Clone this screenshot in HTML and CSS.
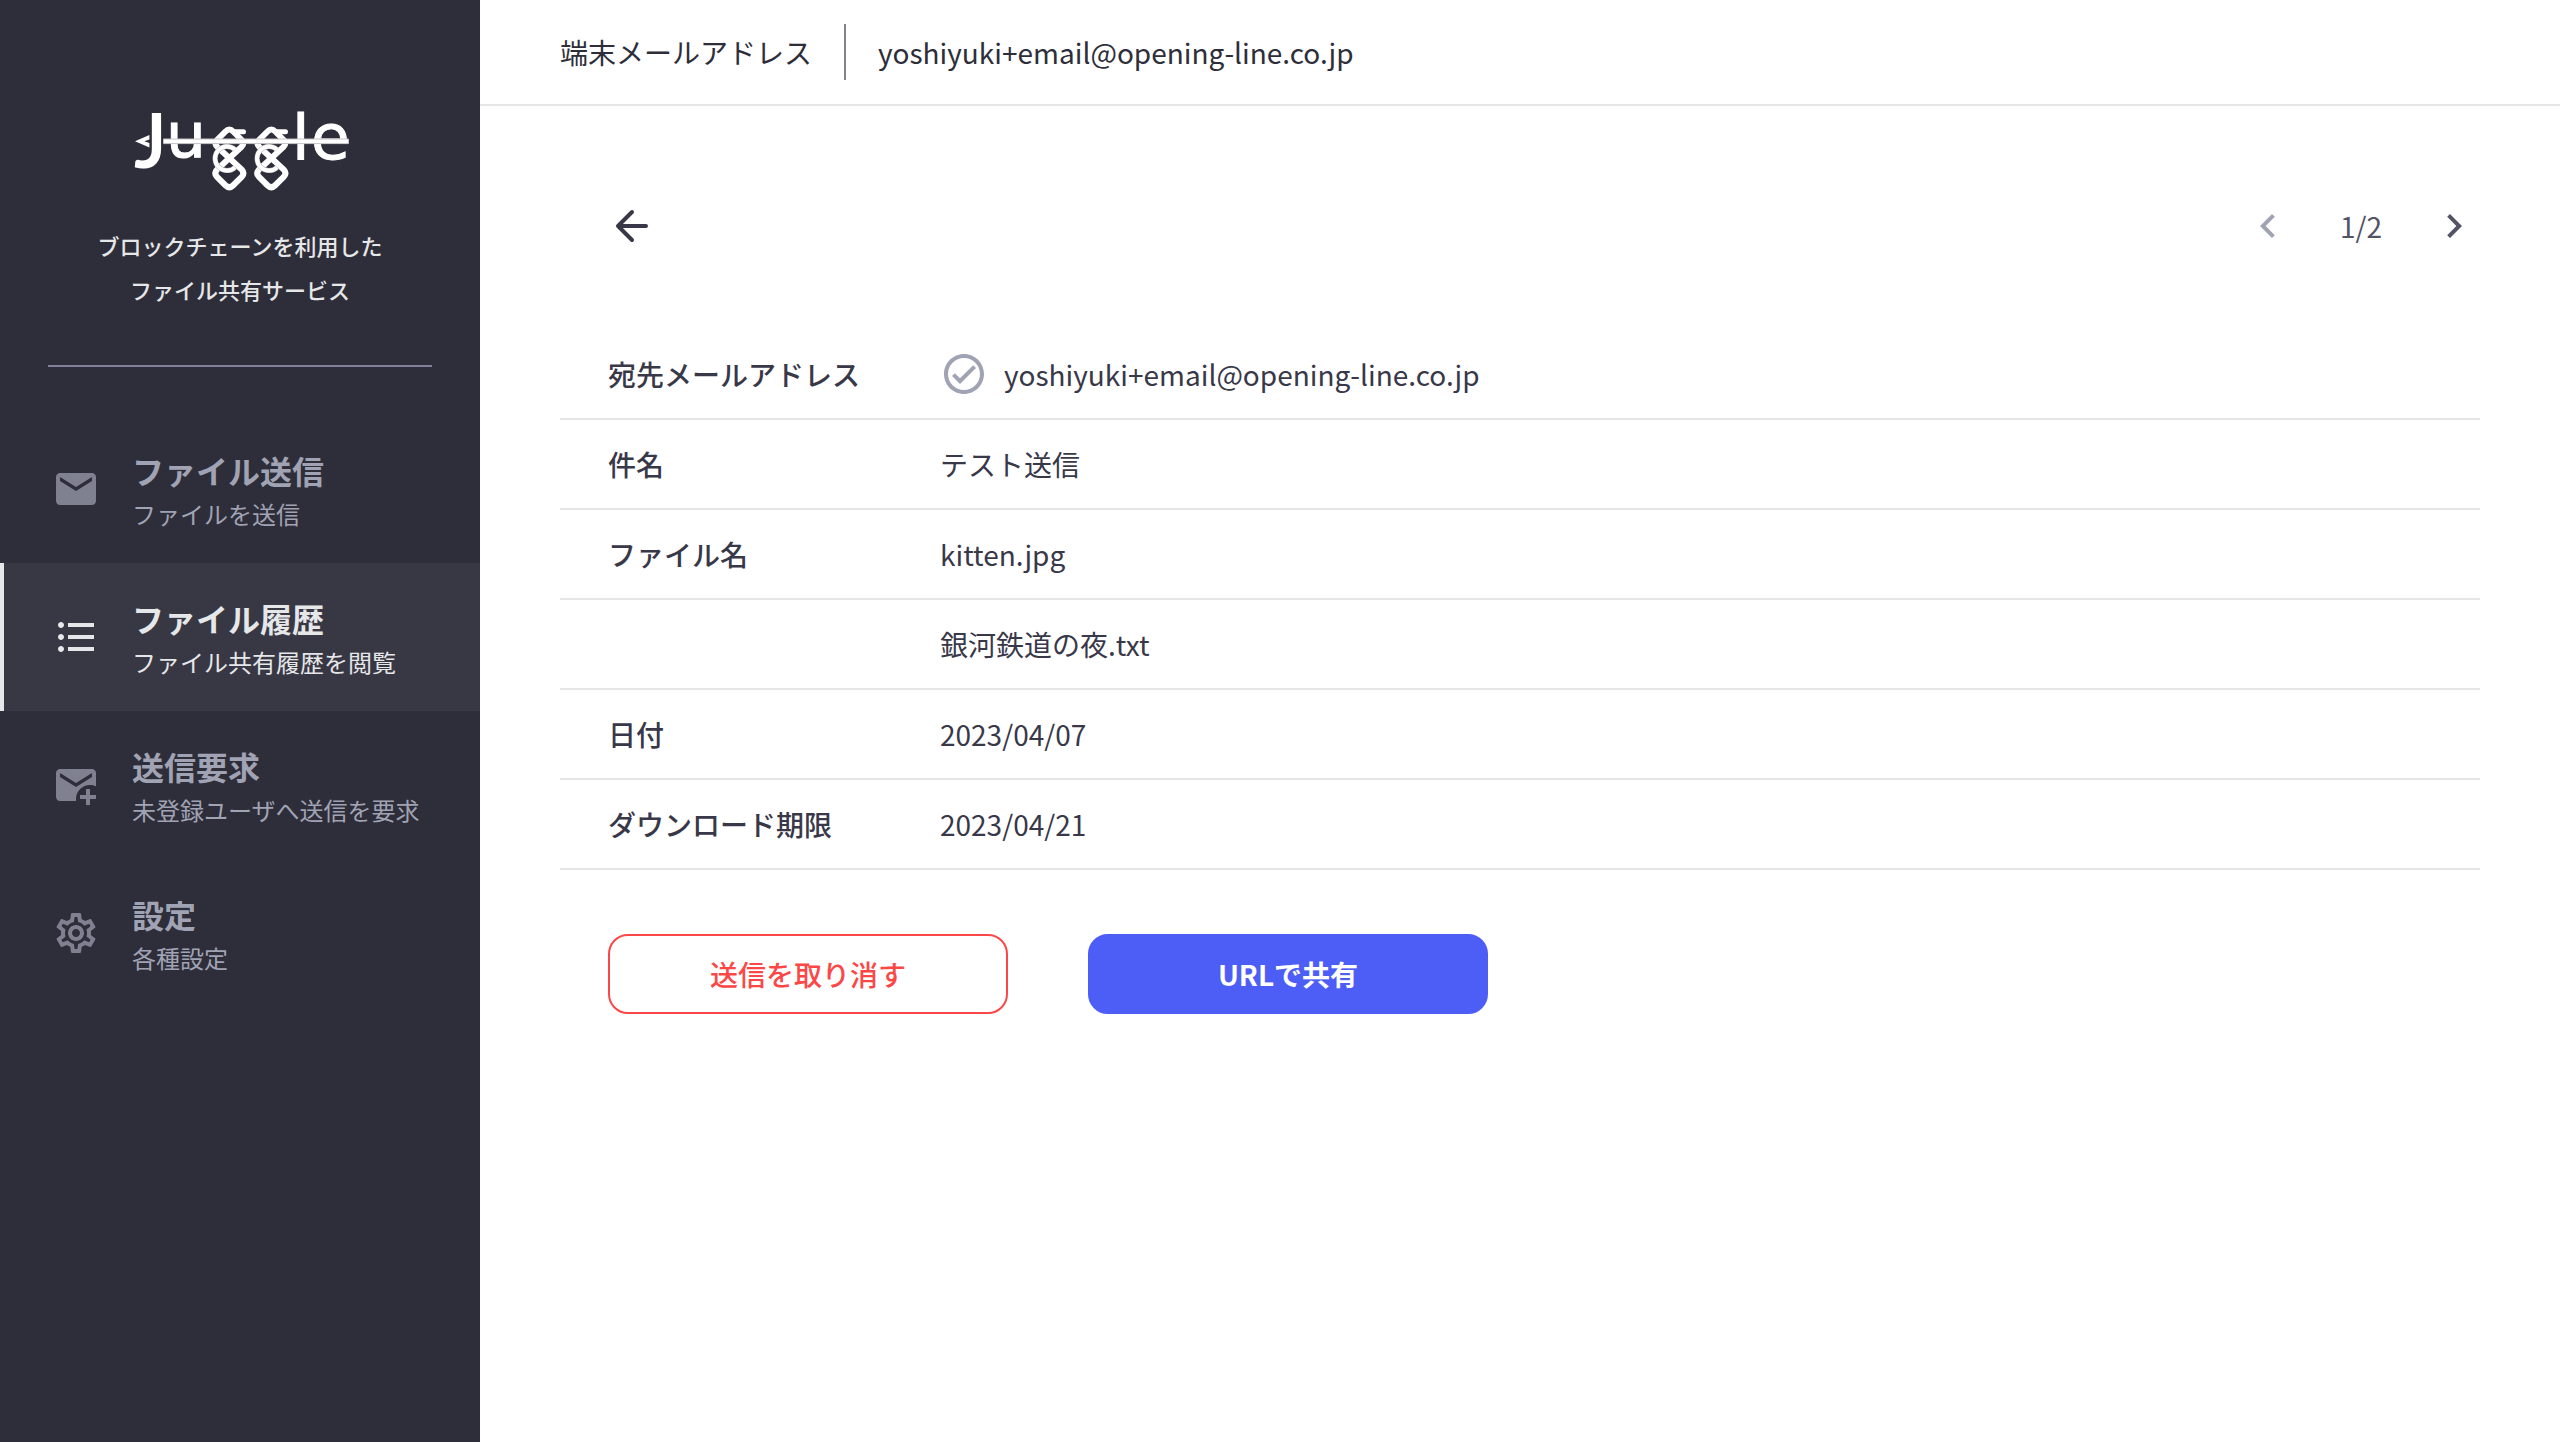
FILE: index.html
```html
<!DOCTYPE html>
<html lang="ja">

<head>
  <meta charset="UTF-8">
  <meta name="viewport" content="width=device-width, initial-scale=1.0">
  <title>Juggle - ファイル履歴</title>
  <link rel="stylesheet" href="styles.css">
</head>

<body>
  <aside class="sidebar">
    <div class="brand">
      <svg class="logo" viewBox="0 0 220 84" role="img" aria-label="Juggle">
        <path d="M5 33.3 19.400 27v4.600l-5 1.700 5 1.800v4.400z" fill="#fff"/>
        <text class="logo-j" x="5" y="59">J</text>
        <text class="logo-text" y="49 51 51" x="36 162 181">ule</text>
        <g id="loop">
          <path d="M104 23.800h9.500" class="ear"/>
          <path d="M95.500 23.500 87 32q-3 3.300 0 6.600L111.700 61.500q3.500 3.800 0 7.500L103 77.500q-3.700 3.500-7.400 0L87 69q-3.500-3.700 0-7.500L111.700 38.600q3-3.300 0-6.600L103.200 23.500q-3.850-4-7.700 0z" class="loop-line"/>
          <path d="M105 41.500a12 12 0 1 0 0 18" class="ring-edge"/>
          <path d="M105 41.500a12 12 0 1 0 0 18" class="ring"/>
        </g>
        <use href="#loop" x="42"/>
        <path d="M33.500 31h185v4.600h-185z" class="logo-bar"/>
      </svg>
      <p class="tagline">ブロックチェーンを利用した<br>ファイル共有サービス</p>
    </div>

    <nav class="menu" aria-label="メインメニュー">
      <a class="menu-item" href="#send">
        <svg class="icon" viewBox="0 0 24 24"><path d="M20 4H4c-1.100 0-1.990.9-1.990 2L2 18c0 1.100.9 2 2 2h16c1.100 0 2-.9 2-2V6c0-1.100-.9-2-2-2zm0 4l-8 5-8-5V6l8 5 8-5v2z"/></svg>
        <span class="menu-text">
          <span class="menu-title">ファイル送信</span>
          <span class="menu-desc">ファイルを送信</span>
        </span>
      </a>
      <a class="menu-item active" href="#history" aria-current="page">
        <svg class="icon" viewBox="0 0 24 24"><path d="M4.500 10.500c-.83 0-1.500.67-1.500 1.500s.67 1.500 1.500 1.500S6 12.830 6 12s-.67-1.500-1.500-1.500zm0-6C3.670 4.500 3 5.170 3 6s.67 1.500 1.500 1.500S6 6.830 6 6s-.67-1.500-1.500-1.500zm0 12c-.83 0-1.500.68-1.500 1.500s.68 1.500 1.500 1.500S6 18.820 6 18s-.67-1.500-1.500-1.500zM8 19h13v-2H8v2zm0-6h13v-2H8v2zm0-8v2h13V5H8z"/></svg>
        <span class="menu-text">
          <span class="menu-title">ファイル履歴</span>
          <span class="menu-desc">ファイル共有履歴を閲覧</span>
        </span>
      </a>
      <a class="menu-item" href="#request">
        <svg class="icon" viewBox="0 0 24 24"><path d="M12 19c0-3.870 3.130-7 7-7 1.080 0 2.090.25 3 .68V6c0-1.100-.9-2-2-2H4c-1.100 0-2 .9-2 2v12c0 1.100.9 2 2 2h8.080c-.05-.33-.08-.66-.08-1zM4 6l8 5 8-5v2l-8 5-8-5V6zM19 14v3h3v2h-3v3h-2v-3h-3v-2h3v-3z"/></svg>
        <span class="menu-text">
          <span class="menu-title">送信要求</span>
          <span class="menu-desc">未登録ユーザへ送信を要求</span>
        </span>
      </a>
      <a class="menu-item" href="#settings">
        <svg class="icon" viewBox="0 0 24 24"><path d="M19.430 12.980c.04-.32.07-.64.07-.98 0-.34-.03-.66-.07-.98l2.110-1.650c.19-.15.24-.42.12-.64l-2-3.460c-.09-.16-.26-.25-.44-.25-.06 0-.12.01-.17.03l-2.490 1c-.52-.4-1.080-.73-1.690-.98l-.38-2.650C14.460 2.180 14.250 2 14 2h-4c-.25 0-.46.18-.49.42l-.38 2.650c-.61.25-1.170.59-1.690.98l-2.490-1c-.06-.02-.12-.03-.18-.03-.17 0-.34.09-.43.25l-2 3.460c-.13.22-.07.49.12.64l2.110 1.650c-.04.32-.07.65-.07.98 0 .33.03.66.07.98l-2.110 1.650c-.19.15-.24.42-.12.64l2 3.460c.09.16.26.25.44.25.06 0 .12-.01.17-.03l2.490-1c.52.4 1.080.73 1.690.98l.38 2.650c.03.24.24.42.49.42h4c.25 0 .46-.18.49-.42l.38-2.650c.61-.25 1.170-.59 1.690-.98l2.490 1c.06.02.12.03.18.03.17 0 .34-.09.43-.25l2-3.460c.12-.22.07-.49-.12-.64l-2.110-1.650zm-1.980-1.710c.04.31.05.52.05.73 0 .21-.02.43-.05.73l-.14 1.130.89.7 1.080.84-.7 1.210-1.270-.51-1.040-.42-.9.68c-.43.32-.84.56-1.250.73l-1.060.43-.16 1.130-.2 1.350h-1.400l-.19-1.350-.16-1.130-1.060-.43c-.43-.18-.83-.41-1.230-.71l-.91-.7-1.060.43-1.270.51-.7-1.210 1.080-.84.89-.7-.14-1.130c-.03-.31-.05-.54-.05-.74s.02-.43.05-.73l.14-1.130-.89-.7-1.080-.84.7-1.210 1.270.51 1.040.42.9-.68c.43-.32.84-.56 1.250-.73l1.060-.43.16-1.130.2-1.350h1.390l.19 1.350.16 1.130 1.060.43c.43.18.83.41 1.230.71l.91.7 1.060-.43 1.270-.51.7 1.210-1.070.85-.89.7.14 1.130zM12 8c-2.210 0-4 1.790-4 4s1.790 4 4 4 4-1.790 4-4-1.790-4-4-4zm0 6c-1.100 0-2-.9-2-2s.9-2 2-2 2 .9 2 2-.9 2-2 2z"/></svg>
        <span class="menu-text">
          <span class="menu-title">設定</span>
          <span class="menu-desc">各種設定</span>
        </span>
      </a>
    </nav>
  </aside>

  <div class="content">
    <header class="topbar">
      <span class="topbar-label">端末メールアドレス</span>
      <span class="topbar-value">yoshiyuki+email@opening-line.co.jp</span>
    </header>

    <main class="detail">
      <div class="toolbar">
        <button class="icon-btn" type="button" aria-label="戻る">
          <svg class="icon" viewBox="0 0 24 24"><path d="M19 12H5M12 5l-7 7 7 7" class="arrow"/></svg>
        </button>
        <div class="pager">
          <button class="icon-btn" type="button" aria-label="前へ" disabled>
            <svg class="icon" viewBox="0 0 24 24"><path d="M15.410 7.410L14 6l-6 6 6 6 1.410-1.410L10.830 12z"/></svg>
          </button>
          <span>1/2</span>
          <button class="icon-btn" type="button" aria-label="次へ">
            <svg class="icon" viewBox="0 0 24 24"><path d="M10 6L8.590 7.410 13.170 12l-4.580 4.590L10 18l6-6z"/></svg>
          </button>
        </div>
      </div>

      <table class="info">
        <tbody>
          <tr>
            <th scope="row">宛先メールアドレス</th>
            <td>
              <div class="recipient">
                <svg class="icon" viewBox="0 0 24 24"><path d="M12 2C6.480 2 2 6.480 2 12s4.480 10 10 10 10-4.480 10-10S17.520 2 12 2zm0 18c-4.410 0-8-3.590-8-8s3.590-8 8-8 8 3.590 8 8-3.590 8-8 8zm4.590-12.420L10 14.170l-2.590-2.580L6 13l4 4 8-8z"/></svg>
                <span>yoshiyuki+email@opening-line.co.jp</span>
              </div>
            </td>
          </tr>
          <tr>
            <th scope="row">件名</th>
            <td>テスト送信</td>
          </tr>
          <tr>
            <th scope="row">ファイル名</th>
            <td>kitten.jpg</td>
          </tr>
          <tr>
            <th></th>
            <td>銀河鉄道の夜.txt</td>
          </tr>
          <tr>
            <th scope="row">日付</th>
            <td>2023/04/07</td>
          </tr>
          <tr>
            <th scope="row">ダウンロード期限</th>
            <td>2023/04/21</td>
          </tr>
        </tbody>
      </table>

      <div class="actions">
        <button class="btn btn-cancel" type="button">送信を取り消す</button>
        <button class="btn btn-share" type="button">URLで共有</button>
      </div>
    </main>
  </div>
</body>

</html>
```
FILE: styles.css
```css
:root {
  --dark: #2e2e3a;
  --dark-active: #383845;
  --text: #383849;
  --muted: #a0a3b4;
  --muted-icon: #7f8090;
  --line: #e6e6e6;
  --light: #e6e7e8;
  --red: #fc4747;
  --blue: #4d5ef7;
}

* {
  box-sizing: border-box;
}

body {
  display: flex;
  min-height: 100vh;
  margin: 0;
  font-family: "Noto Sans CJK JP", sans-serif;
  font-size: 28px;
  line-height: 40px;
  color: var(--text);
  background: #fff;
}

.icon {
  flex: none;
  display: block;
  width: 48px;
  height: 48px;
  fill: currentColor;
}

/* sidebar */
.sidebar {
  flex: none;
  width: 480px;
  background: var(--dark);
  color: var(--light);
}

.brand {
  display: flex;
  flex-direction: column;
  align-items: center;
  margin: 0 48px;
  padding: 108px 0 54px;
  border-bottom: 2px solid #7f7f96;
}

.logo {
  width: 220px;
  height: 84px;
  overflow: visible;
}

.logo-j,
.logo-text {
  fill: #fff;
  stroke: #fff;
}

.logo-j {
  font: 74px Lato, sans-serif;
  stroke-width: 2px;
}

.logo-text {
  font: 63px "DejaVu Sans", sans-serif;
  stroke-width: 1px;
}

.loop-line {
  fill: none;
  stroke: #fff;
  stroke-width: 6;
}

.ear {
  fill: none;
  stroke: #fff;
  stroke-width: 5;
  stroke-linecap: round;
}

.ring-edge {
  fill: none;
  stroke: #b9b9be;
  stroke-width: 5;
}

.ring {
  fill: none;
  stroke: #fff;
  stroke-width: 4;
}

.logo-bar {
  fill: #fff;
  stroke: #c4c4c8;
  stroke-width: 1;
}

.tagline {
  margin: 31px 0 0;
  font-size: 22px;
  line-height: 44px;
  font-weight: 500;
  text-align: center;
}

.menu {
  padding-top: 48px;
}

.menu-item {
  display: flex;
  align-items: center;
  gap: 32px;
  height: 148px;
  padding-left: 48px;
  border-left: 4px solid transparent;
  color: var(--muted);
  text-decoration: none;
}

.menu-item .icon {
  color: var(--muted-icon);
}

.menu-item.active {
  border-left-color: var(--light);
  background: var(--dark-active);
  color: var(--light);
}

.menu-item.active .icon {
  color: var(--light);
}

.menu-text {
  display: flex;
  flex-direction: column;
}

.menu-title {
  font-size: 32px;
  line-height: 50px;
  font-weight: 700;
}

.menu-desc {
  font-size: 24px;
  line-height: 38px;
}

/* main column */
.content {
  flex: 1;
  min-width: 0;
}

.topbar {
  display: flex;
  align-items: center;
  height: 106px;
  padding: 0 80px;
  border-bottom: 2px solid var(--line);
  color: var(--dark);
}

.topbar-value {
  margin-left: 32px;
  padding: 8px 0 8px 32px;
  border-left: 2px solid #7f7f96;
}

.detail {
  padding: 96px 80px;
}

.toolbar {
  display: flex;
  justify-content: space-between;
  padding: 0 2px 0 48px;
}

.icon-btn {
  padding: 0;
  border: none;
  background: none;
  color: inherit;
  cursor: pointer;
}

.icon-btn:disabled {
  color: var(--muted);
  cursor: default;
}

.arrow {
  fill: none;
  stroke: currentColor;
  stroke-width: 2;
  stroke-linecap: round;
  stroke-linejoin: round;
}

.pager {
  display: flex;
  align-items: center;
  gap: 48px;
  color: #535366;
}

.info {
  width: 100%;
  margin-top: 80px;
  border-spacing: 0;
}

.info th,
.info td {
  height: 90px;
  padding: 0;
  border-bottom: 2px solid var(--line);
}

.info th {
  width: 380px;
  padding-left: 48px;
  font-weight: 500;
  text-align: left;
}

.recipient {
  display: flex;
  align-items: center;
  gap: 16px;
}

.recipient .icon {
  color: var(--muted);
}

.actions {
  display: flex;
  gap: 80px;
  padding: 64px 48px 0;
}

.btn {
  width: 400px;
  height: 80px;
  border: 2px solid var(--red);
  border-radius: 20px;
  font: inherit;
  font-weight: 500;
  cursor: pointer;
}

.btn-cancel {
  background: transparent;
  color: var(--red);
}

.btn-share {
  border-color: var(--blue);
  background: var(--blue);
  color: #fff;
  font-weight: 700;
}
```
